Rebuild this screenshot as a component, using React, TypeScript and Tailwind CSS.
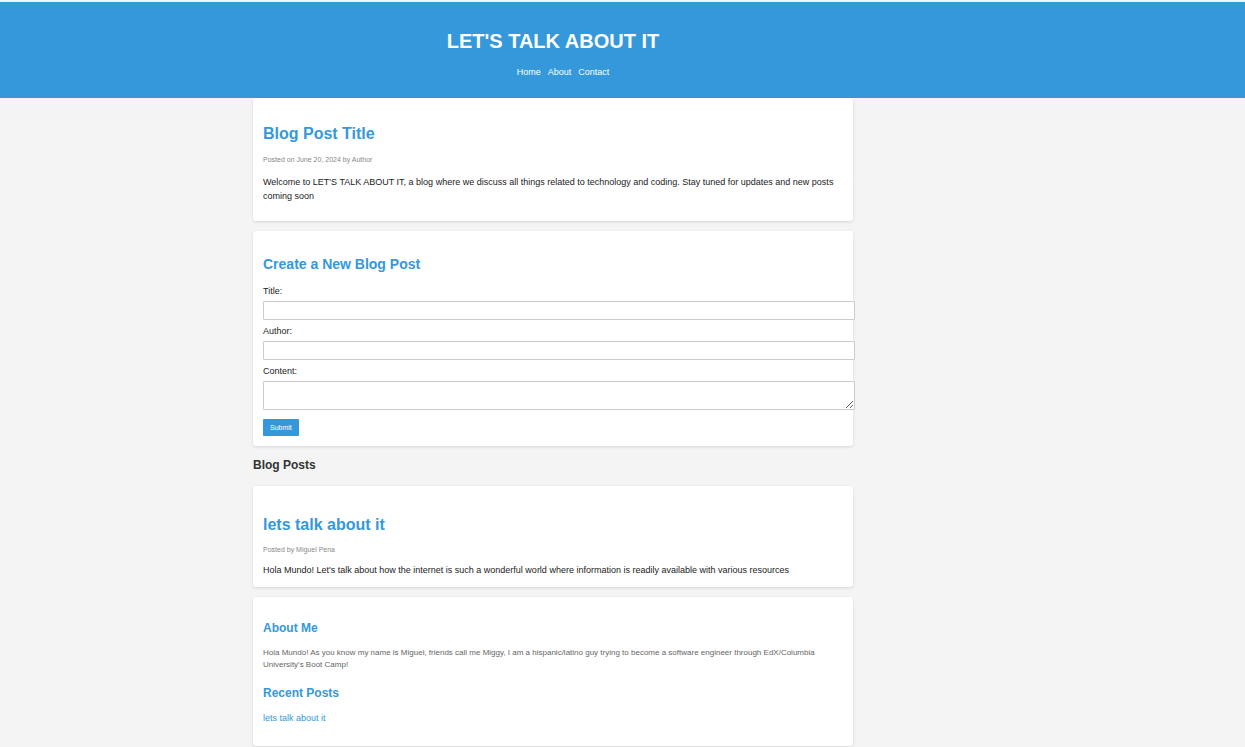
import type { ReactNode } from "react";

const navLinks = ["Home", "About", "Contact"];

function Card({ className, children }: { className: string; children: ReactNode }) {
  return (
    <section className={`rounded-[3px] bg-white px-[10px] pt-[10px] shadow-[0_1px_3px_rgba(0,0,0,0.12)] ${className}`}>
      {children}
    </section>
  );
}

function SideHeading({ children }: { children: ReactNode }) {
  return <h3 className="text-[12px] leading-[18px] font-bold text-[#3498db]">{children}</h3>;
}

const fieldClass =
  "mt-[3px] block w-[calc(100%+12px)] rounded-[1px] border border-[#ccc] bg-white px-1 text-[9px] outline-none";

export default function App() {
  return (
    <div className="min-h-screen bg-[#f4f4f4] pt-[2px] font-['Liberation_Sans',Arial,sans-serif] text-[9px] leading-[14px] text-[#222]">
      <header className="bg-[#3498db] pt-[24px] pr-[139px] pb-[19px] text-center text-white">
        <h1 className="text-[20px] leading-[30px] font-bold">LET'S TALK ABOUT IT</h1>
        <nav className="mt-[9px] pl-[20px]">
          <ul className="flex justify-center gap-[7px]">
            {navLinks.map((label) => (
              <li key={label}>
                <a href="#">{label}</a>
              </li>
            ))}
          </ul>
        </nav>
      </header>

      <div className="pr-[139px]">
        <main className="mx-auto max-w-[600px]">
          <Card className="pb-[18px]">
            <h2 className="mt-[13px] text-[16px] leading-[26px] font-bold text-[#3498db]">Blog Post Title</h2>
            <p className="mt-[7px] text-[7px] leading-[12px] text-[#888]">Posted on June 20, 2024 by Author</p>
            <p className="mt-[9px]">
              Welcome to LET'S TALK ABOUT IT, a blog where we discuss all things related to technology and coding. Stay
              tuned for updates and new posts coming soon
            </p>
          </Card>

          <Card className="mt-[10px] pb-[10px]">
            <h2 className="mt-[12px] text-[14px] leading-[22px] font-bold text-[#3498db]">Create a New Blog Post</h2>
            <form className="mt-[9px]" onSubmit={(event) => event.preventDefault()}>
              <label htmlFor="title" className="block">
                Title:
              </label>
              <input id="title" type="text" className={`${fieldClass} h-[19px]`} />
              <label htmlFor="author" className="mt-[4px] block">
                Author:
              </label>
              <input id="author" type="text" className={`${fieldClass} h-[19px]`} />
              <label htmlFor="content" className="mt-[4px] block">
                Content:
              </label>
              <textarea id="content" className={`${fieldClass} h-[29px]`} />
              <button
                type="submit"
                className="mt-[9px] block h-[17px] rounded-[1px] bg-[#3498db] px-[7px] text-[7px] leading-[17px] text-white"
              >
                Submit
              </button>
            </form>
          </Card>

          <h2 className="mt-[10px] text-[12px] leading-[18px] font-bold text-[#333]">Blog Posts</h2>

          <Card className="mt-[12px] pb-[10px]">
            <h2 className="mt-[16px] text-[16px] leading-[26px] font-bold text-[#3498db]">lets talk about it</h2>
            <p className="mt-[6px] text-[7px] leading-[12px] text-[#888]">Posted by Miguel Pena</p>
            <p className="mt-[7px]">
              Hola Mundo! Let's talk about how the internet is such a wonderful world where information is readily
              available with various resources
            </p>
          </Card>

          <Card className="mt-[10px] pb-[21px]">
            <div className="pt-[12px]">
              <SideHeading>About Me</SideHeading>
              <p className="mt-[10px] text-[8px] leading-[12px] text-[#666]">
                Hola Mundo! As you know my name is Miguel, friends call me Miggy, I am a hispanic/latino guy trying to
                become a software engineer through EdX/Columbia University's Boot Camp!
              </p>
            </div>
            <div className="pt-[13px]">
              <SideHeading>Recent Posts</SideHeading>
              <ul className="mt-[9px]">
                <li>
                  <a href="#" className="text-[#3498db]">
                    lets talk about it
                  </a>
                </li>
              </ul>
            </div>
          </Card>
        </main>
      </div>
    </div>
  );
}
